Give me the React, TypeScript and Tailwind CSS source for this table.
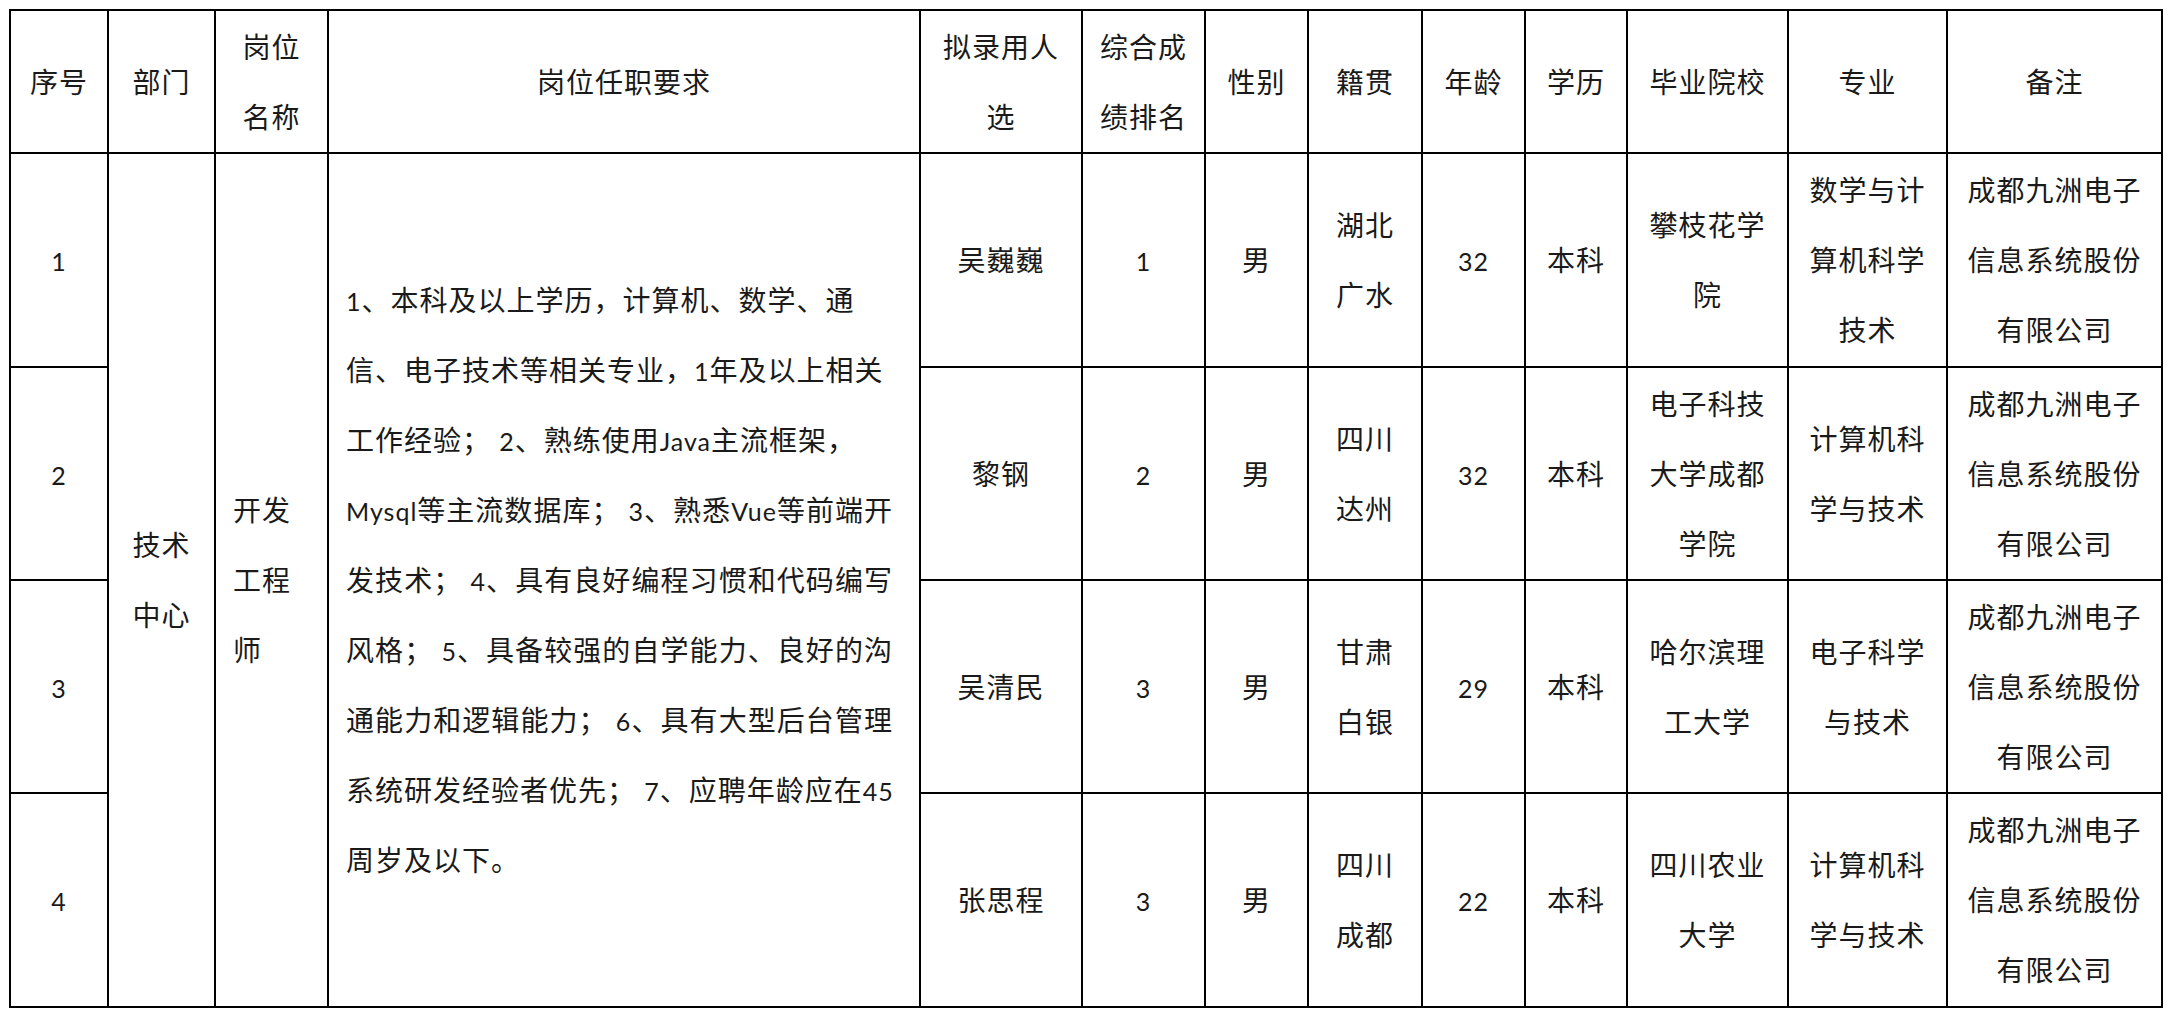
import React from "react";

const rich = (text: string) =>
  text.split(/([A-Za-z0-9]+)/).map((seg, i) =>
    /^[A-Za-z0-9]+$/.test(seg) ? (
      <span key={i} className="text-[25px]">
        {seg}
      </span>
    ) : (
      <React.Fragment key={i}>{seg}</React.Fragment>
    )
  );

function Cell({
  lines,
  className = "",
  align = "center",
}: {
  lines: string[];
  className?: string;
  align?: "center" | "left";
}) {
  return (
    <div
      className={`bg-white flex flex-col justify-center ${
        align === "center" ? "items-center text-center" : "items-start text-left pl-[17px]"
      } ${className}`}
    >
      {lines.map((l, i) => (
        <div key={i} className="h-[70px] leading-[70px] whitespace-nowrap">
          {rich(l)}
        </div>
      ))}
    </div>
  );
}

const reqLines: { t: string; j: boolean }[] = [
  { t: "1、本科及以上学历，计算机、数学、通", j: false },
  { t: "信、电子技术等相关专业，1年及以上相关", j: false },
  { t: "工作经验； 2、熟练使用Java主流框架，", j: false },
  { t: "Mysql等主流数据库； 3、熟悉Vue等前端开", j: true },
  { t: "发技术； 4、具有良好编程习惯和代码编写", j: true },
  { t: "风格； 5、具备较强的自学能力、良好的沟", j: true },
  { t: "通能力和逻辑能力； 6、具有大型后台管理", j: true },
  { t: "系统研发经验者优先； 7、应聘年龄应在45", j: false },
  { t: "周岁及以下。", j: false },
];

function Requirements() {
  return (
    <div className="bg-white row-span-4 flex flex-col justify-center items-start pl-[17px]">
      {reqLines.map((l, i) => (
        <div
          key={i}
          className={`h-[70px] leading-[70px] ${
            l.j ? "w-[547px] text-justify [text-align-last:justify]" : "text-left whitespace-nowrap"
          }`}
        >
          {rich(l.t)}
        </div>
      ))}
    </div>
  );
}

const company = ["成都九洲电子", "信息系统股份", "有限公司"];

const rows = [
  {
    no: "1",
    name: ["吴巍巍"],
    rank: "1",
    sex: "男",
    origin: ["湖北", "广水"],
    age: "32",
    edu: "本科",
    school: ["攀枝花学", "院"],
    major: ["数学与计", "算机科学", "技术"],
  },
  {
    no: "2",
    name: ["黎钢"],
    rank: "2",
    sex: "男",
    origin: ["四川", "达州"],
    age: "32",
    edu: "本科",
    school: ["电子科技", "大学成都", "学院"],
    major: ["计算机科", "学与技术"],
  },
  {
    no: "3",
    name: ["吴清民"],
    rank: "3",
    sex: "男",
    origin: ["甘肃", "白银"],
    age: "29",
    edu: "本科",
    school: ["哈尔滨理", "工大学"],
    major: ["电子科学", "与技术"],
  },
  {
    no: "4",
    name: ["张思程"],
    rank: "3",
    sex: "男",
    origin: ["四川", "成都"],
    age: "22",
    edu: "本科",
    school: ["四川农业", "大学"],
    major: ["计算机科", "学与技术"],
  },
];

const headers: string[][] = [
  ["序号"],
  ["部门"],
  ["岗位", "名称"],
  ["岗位任职要求"],
  ["拟录用人", "选"],
  ["综合成", "绩排名"],
  ["性别"],
  ["籍贯"],
  ["年龄"],
  ["学历"],
  ["毕业院校"],
  ["专业"],
  ["备注"],
];

export default function App() {
  return (
    <div className="w-full min-h-[1018px] bg-white pt-[9px] pl-[9px] font-['Lato','Noto_Sans_CJK_SC',sans-serif] text-[28px] tracking-[1px] text-[#1a1a1a]">
      <div className="w-fit grid grid-cols-[96px_105px_111px_590px_160px_121px_101px_112px_101px_100px_159px_157px_213px] grid-rows-[141px_212px_211px_211px_212px] gap-[2px] p-[2px] bg-black">
        {headers.map((h, i) => (
          <Cell key={`h${i}`} lines={h} />
        ))}
        {rows.map((r, idx) => (
          <React.Fragment key={r.no}>
            <Cell lines={[r.no]} />
            {idx === 0 && (
              <>
                <Cell lines={["技术", "中心"]} className="row-span-4" />
                <Cell lines={["开发", "工程", "师"]} className="row-span-4" align="left" />
                <Requirements />
              </>
            )}
            <Cell lines={r.name} />
            <Cell lines={[r.rank]} />
            <Cell lines={[r.sex]} />
            <Cell lines={r.origin} />
            <Cell lines={[r.age]} />
            <Cell lines={[r.edu]} />
            <Cell lines={r.school} />
            <Cell lines={r.major} />
            <Cell lines={company} />
          </React.Fragment>
        ))}
      </div>
    </div>
  );
}
